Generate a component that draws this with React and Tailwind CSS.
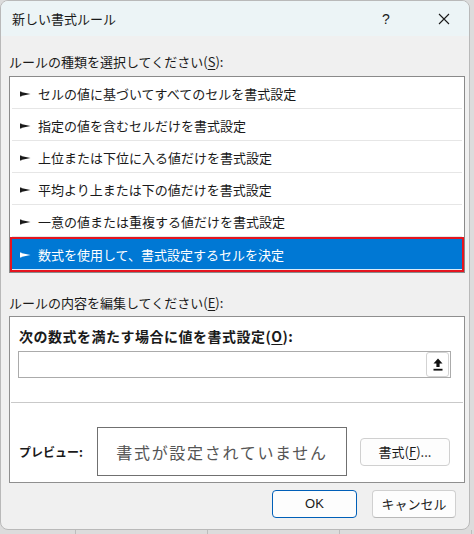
const rules = [
  "セルの値に基づいてすべてのセルを書式設定",
  "指定の値を含むセルだけを書式設定",
  "上位または下位に入る値だけを書式設定",
  "平均より上または下の値だけを書式設定",
  "一意の値または重複する値だけを書式設定",
];

const Pointer = ({ color }) => (
  <svg width="11" height="6" viewBox="0 0 11 6" className="shrink-0">
    <rect x="0" y="0.5" width="1.4" height="5" fill={color} />
    <path d="M1 1 L10.5 3 L1 5 Z" fill={color} />
  </svg>
);

const App = () => {
  return (
    <div className="w-[474px] h-[534px] bg-[#dcdcdc] overflow-hidden font-['Noto_Sans_CJK_JP',sans-serif] text-[#1a1a1a]">
      <div className="flex">
        <div className="w-[470px] h-[530px] rounded-[8px] border border-[#b9b9b9] bg-[#f0f0f0] overflow-hidden flex flex-col">
          {/* title bar */}
          <div className="h-[35px] shrink-0 bg-[#ecf4f6] flex items-center pl-[11px]">
            <div className="text-[13px] leading-[20px]">新しい書式ルール</div>
            <div className="ml-auto flex items-center gap-[18px] pr-[5px]">
              <div className="w-[40px] text-center text-[14px] leading-[20px] font-['Liberation_Sans',sans-serif]">?</div>
              <div className="w-[40px] flex justify-center">
                <svg width="12" height="12" viewBox="0 0 12 12">
                  <path d="M1 1 L11 11 M11 1 L1 11" stroke="#1a1a1a" strokeWidth="1.1" fill="none" />
                </svg>
              </div>
            </div>
          </div>

          <div className="pl-[8px] pr-[4px] flex flex-col">
            <div className="mt-[16px] h-[20px] leading-[20px] text-[13px]">
              ルールの種類を選択してください(<span className="underline underline-offset-2">S</span>):
            </div>

            {/* rule list */}
            <div className="mt-[4px] border border-[#8a8a8a] bg-white flex flex-col">
              {rules.map((r) => (
                <div key={r} className="h-[32px] mx-[2px] border-b border-[#e6e6e6] flex items-center pt-[3px] pl-[8px] gap-[7px]">
                  <Pointer color="#1a1a1a" />
                  <span className="text-[13px] leading-[20px]">{r}</span>
                </div>
              ))}
              <div className="h-[35px] border-2 border-[#e5141f]">
                <div className="h-full bg-[#0078d4] shadow-[inset_0_-1px_0_#d9ecfa] flex items-center pl-[8px] gap-[7px] text-white">
                  <Pointer color="#ffffff" />
                  <span className="text-[13px] leading-[20px]">数式を使用して、書式設定するセルを決定</span>
                </div>
              </div>
            </div>

            <div className="mt-[20px] h-[20px] leading-[20px] text-[13px]">
              ルールの内容を編集してください(<span className="underline underline-offset-2">E</span>):
            </div>

            {/* edit box */}
            <div className="mt-[3px] border border-[#8f8f8f] bg-white flex flex-col pb-[6px]">
              <div className="mt-[9px] pl-[9px] h-[20px] leading-[20px] text-[14px] font-bold tracking-[0.5px]">
                次の数式を満たす場合に値を書式設定(<span className="underline underline-offset-2">O</span>):
              </div>
              <div className="mt-[5px] ml-[8px] w-[433px] h-[27px] border border-[#ababab] flex items-center justify-end pr-[1px]">
                <div className="w-[23px] h-[25px] rounded-[3px] border border-[#d3d3d3] bg-white flex items-center justify-center">
                  <svg width="10" height="13" viewBox="0 0 10 13">
                    <path d="M5 0.5 L9.5 5.5 L6.6 5.5 L6.6 9 L3.4 9 L3.4 5.5 L0.5 5.5 Z" fill="#111" />
                    <rect x="0.5" y="10.8" width="9" height="1.8" fill="#111" />
                  </svg>
                </div>
              </div>
              <div className="mt-[24px] mx-px h-px bg-[#c9c9c9]" />
              <div className="mt-[24px] h-[49px] pl-[9px] flex items-center">
                <div className="w-[78px] text-[12px] font-bold leading-[20px]">プレビュー:</div>
                <div className="w-[250px] h-[49px] border border-[#707070] flex items-center justify-center text-[16px] tracking-[1.7px] text-[#555555]">
                  書式が設定されていません
                </div>
                <div className="ml-[13px] w-[90px] h-[28px] rounded-[4px] border border-[#d0d0d0] bg-[#fdfdfd] flex items-center justify-center text-[13px]">
                  書式(<span className="underline underline-offset-2">F</span>)...
                </div>
              </div>
            </div>

            {/* buttons */}
            <div className="mt-[7px] flex justify-end gap-[15px] pr-[9px]">
              <div className="w-[85px] h-[28px] rounded-[4px] border border-[#005fb8] bg-[#fdfdfd] flex items-center justify-center text-[13px] font-['Liberation_Sans',sans-serif]">
                OK
              </div>
              <div className="w-[84px] h-[28px] rounded-[4px] border border-[#d0d0d0] border-b-[#b8b8b8] bg-[#fdfdfd] flex items-center justify-center text-[13px]">
                キャンセル
              </div>
            </div>
          </div>
        </div>
      </div>
      <div className="h-[4px] flex">
        <div className="w-[76px] border-r border-[#bdbdbd]" />
        <div className="w-[132px] border-r border-[#bdbdbd]" />
        <div className="w-[132px] border-r border-[#bdbdbd]" />
        <div className="w-[132px] border-r border-[#bdbdbd]" />
      </div>
    </div>
  );
};

export default App;
